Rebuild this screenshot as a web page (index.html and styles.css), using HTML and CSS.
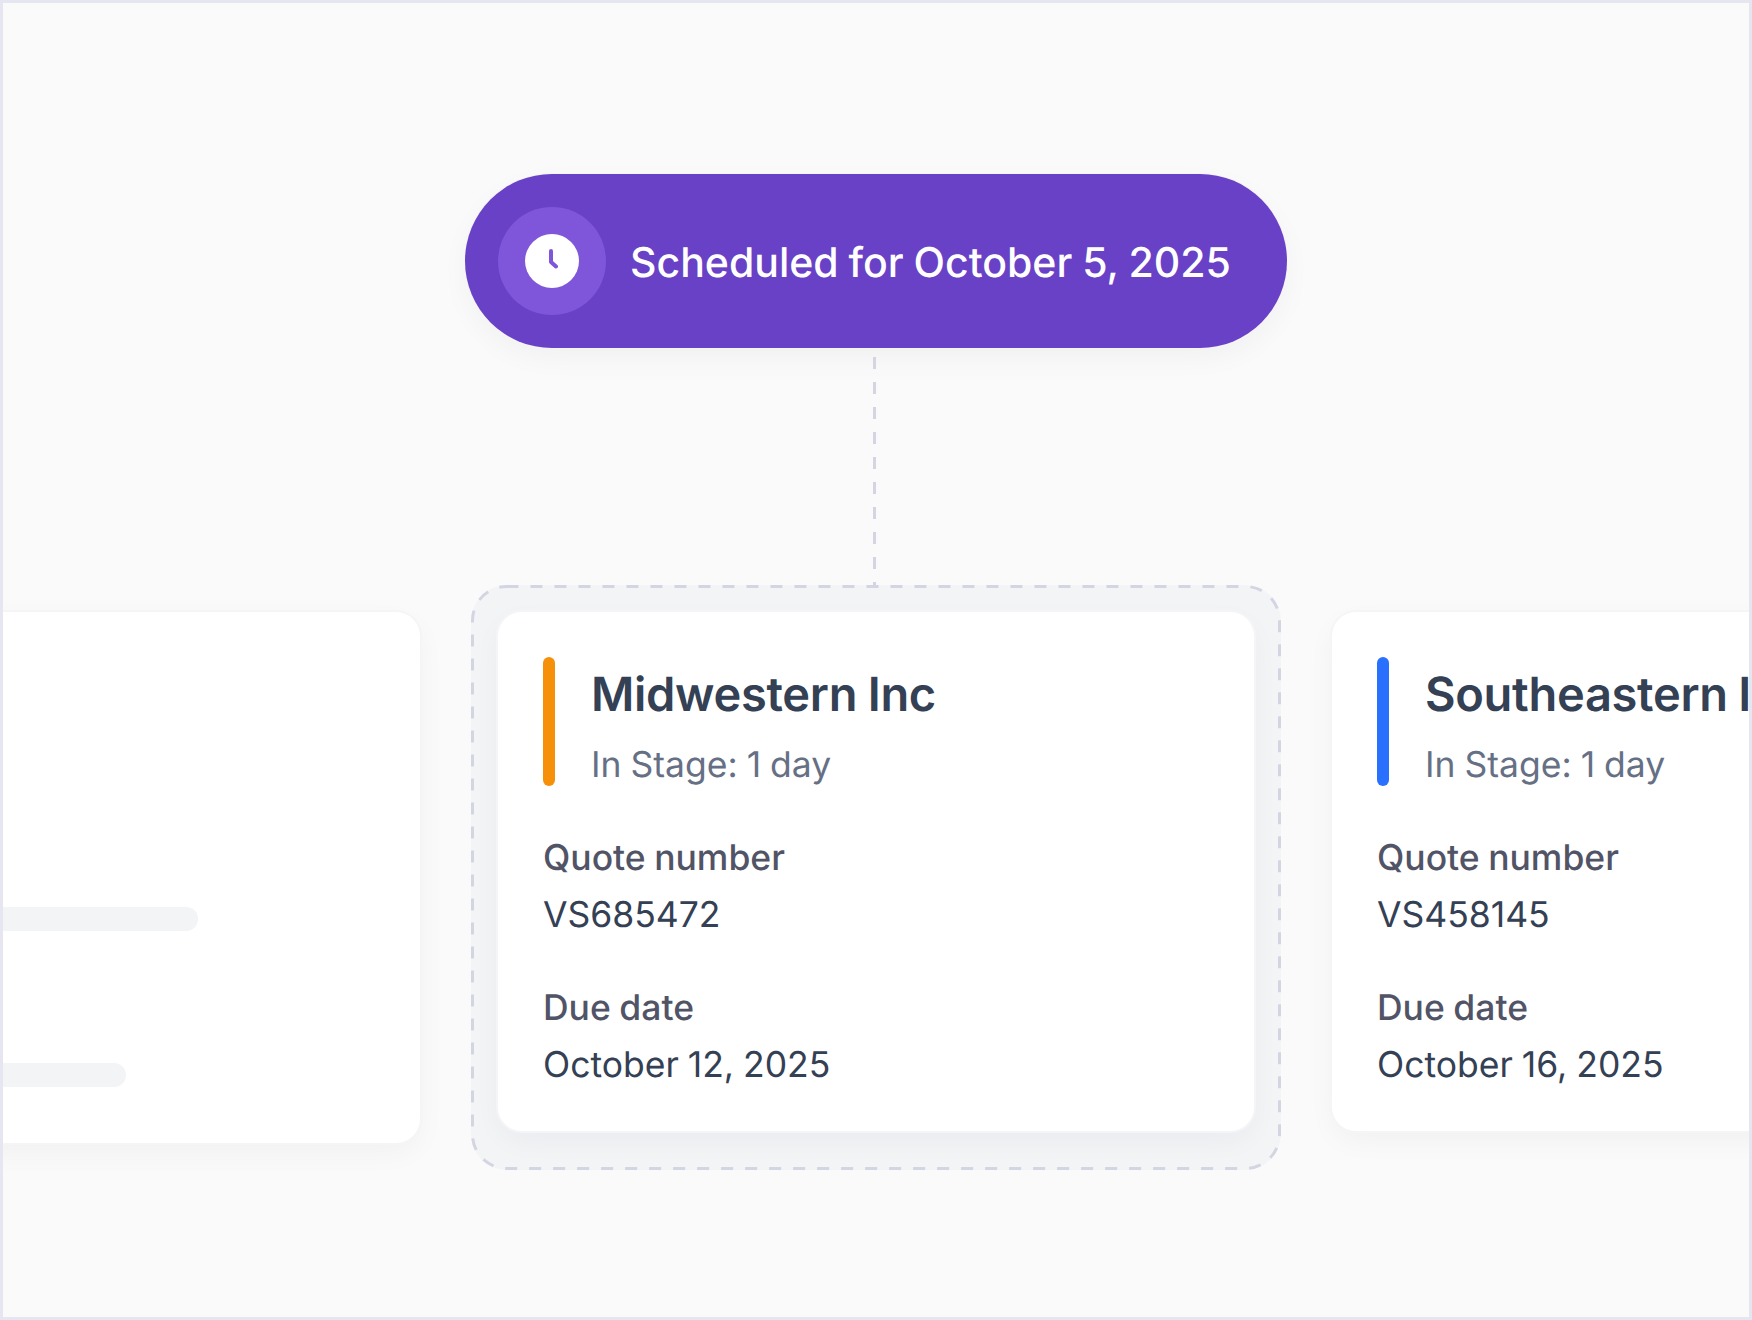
FILE: index.html
```html
<!DOCTYPE html>
<html lang="en">
<head>
<meta charset="utf-8">
<title>Scheduled</title>
<link rel="stylesheet" href="styles.css">
</head>
<body>
<main class="frame">
  <section class="pill">
    <span class="pill-halo">
      <svg class="clock" viewBox="0 0 54 54" aria-hidden="true">
        <circle cx="27" cy="27" r="27" fill="#fff"/>
        <path d="M26 17v11l5 4.5" fill="none" stroke="#7f56d9" stroke-width="4" stroke-linecap="round" stroke-linejoin="round"/>
      </svg>
    </span>
    <span class="pill-text">Scheduled for October 5, 2025</span>
  </section>
  <div class="connector"></div>
  <section class="row">
    <article class="card card-ghost">
      <div class="ghost-line ghost-line-a"></div>
      <div class="ghost-line ghost-line-b"></div>
    </article>
    <div class="focus">
      <svg class="focus-outline" width="810" height="585" aria-hidden="true">
        <rect x="1.5" y="1.5" width="807" height="582" rx="34" ry="34" fill="none" stroke="#d4d5e2" stroke-width="3" stroke-dasharray="12 12"/>
      </svg>
      <article class="card">
        <header class="card-head">
          <span class="accent accent-orange"></span>
          <div class="head-text">
            <h2 class="title">Midwestern Inc</h2>
            <p class="stage">In Stage: 1 day</p>
          </div>
        </header>
        <dl class="fields">
          <dt>Quote number</dt><dd>VS685472</dd>
          <dt>Due date</dt><dd>October 12, 2025</dd>
        </dl>
      </article>
    </div>
    <article class="card">
      <header class="card-head">
        <span class="accent accent-blue"></span>
        <div class="head-text">
          <h2 class="title">Southeastern Inc</h2>
          <p class="stage">In Stage: 1 day</p>
        </div>
      </header>
      <dl class="fields">
        <dt>Quote number</dt><dd>VS458145</dd>
        <dt>Due date</dt><dd>October 16, 2025</dd>
      </dl>
    </article>
  </section>
</main>
</body>
</html>
```
FILE: styles.css
```css
* { box-sizing: border-box; }
html, body { margin: 0; padding: 0; }
body { font-family: Inter, "Liberation Sans", sans-serif; background: #fafafa; text-rendering: geometricPrecision; }
.frame {
  width: 1752px; height: 1320px;
  border: 3px solid #e5e6ef;
  background: #fafafa;
  overflow: hidden;
  display: flex; flex-direction: column; align-items: center;
  padding-top: 171px;
}
.pill {
  width: 822px; height: 174px; border-radius: 87px;
  background: #6941c6;
  box-shadow: 0 0 0 1px #f5f5f8, 0 10px 28px rgba(16,24,40,.04);
  display: flex; align-items: center; gap: 24px;
  padding-left: 33px;
  flex: none;
}
.pill-halo {
  width: 108px; height: 108px; border-radius: 50%;
  background: #7f56d9;
  display: flex; align-items: center; justify-content: center;
  flex: none;
}
.clock { width: 54px; height: 54px; display: block; }
.pill-text { color: #fff; font-size: 41px; font-weight: 500; line-height: 52px; white-space: nowrap; word-spacing: -1px; position: relative; top: 1px; }
.connector {
  height: 231px; width: 3px; margin: 9px 0 -3px -3px;
  background: repeating-linear-gradient(to bottom, #d4d5e2 0 12.5px, transparent 12.5px 25px);
  flex: none;
  position: relative; z-index: 1;
}
.row {
  display: flex; justify-content: center; align-items: flex-start; gap: 78px;
  width: 100%; flex: none;
}
.card {
  width: 756px; height: 519px; flex: none;
  background: #fff; border-radius: 24px;
  padding: 45px;
  box-shadow: 0 0 0 2px #f5f5f8, 0 10px 28px rgba(16,24,40,.04);
}
.row > .card { margin-top: 27px; }
.row > .card-ghost { height: 531px; padding: 0; position: relative; }
.ghost-line { height: 24px; border-radius: 12px; background: #f3f4f6; position: absolute; left: 0; }
.ghost-line-a { top: 295px; width: 534px; }
.ghost-line-b { top: 451px; width: 462px; }
.focus {
  position: relative; flex: none;
  width: 810px; height: 585px;
  margin: 0 -27px;
  padding: 27px;
  border-radius: 36px;
  background: #f3f4f6;
}
.focus-outline { position: absolute; inset: 0; }
.focus .card { position: relative; }
.card-head { display: flex; gap: 36px; align-items: stretch; height: 129px; }
.accent { width: 12px; border-radius: 6px; flex: none; }
.accent-orange { background: #f79009; }
.accent-blue { background: #2970ff; }
.head-text { padding-top: 10px; }
.title { margin: 0; font-size: 47px; line-height: 56px; font-weight: 600; color: #344054; white-space: nowrap; letter-spacing: -.3px; word-spacing: -1px; }
.stage { margin: 20px 0 0; font-size: 35.5px; line-height: 44px; font-weight: 400; color: #667085; white-space: nowrap; word-spacing: -1px; }
.fields { margin: 50px 0 0; }
.fields dt { font-size: 35.5px; line-height: 44px; font-weight: 500; color: #515467; word-spacing: -1px; }
.fields dd { margin: 13px 0 0; font-size: 35.5px; line-height: 44px; font-weight: 400; color: #344054; word-spacing: -1px; }
.fields dd + dt { margin-top: 49px; }
```
